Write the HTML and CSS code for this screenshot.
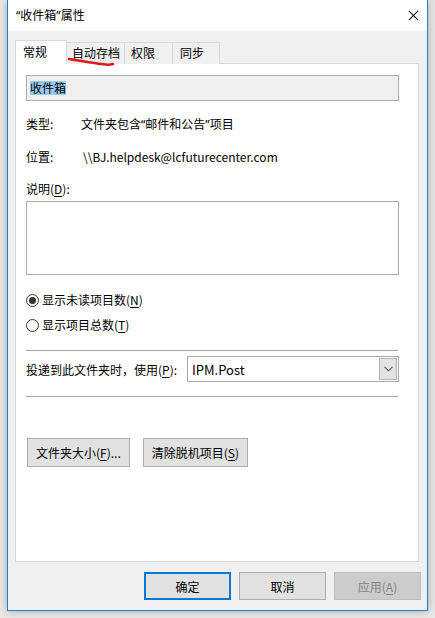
FILE: index.html
```html
<!DOCTYPE html>
<html>
<head>
	<title>“收件箱”属性</title>
	<meta charset="utf-8">
	<link rel="stylesheet" href="styles.css">
</head>
<body>
<div class="window">
	<div class="titlebar">
		<span class="title"><span class="q">“</span>收件箱<span class="q">”</span>属性</span>
		<svg class="close" width="12" height="12" viewBox="0 0 12 12">
			<path d="M1 1 L11 11 M11 1 L1 11" stroke="#000" stroke-width="1.1" fill="none"/>
		</svg>
	</div>

	<div class="tabs">
		<div class="tab active">常规</div>
		<div class="tab t2">自动存档</div>
		<div class="tab t3">权限</div>
		<div class="tab t4">同步</div>
	</div>
	<!-- red pen mark under the second tab -->
	<svg class="mark" width="60" height="14" viewBox="0 0 60 14">
		<path d="M2 3 C 14 5, 26 7, 34 8 S 42 9, 46 8" stroke="#e8141c" stroke-width="2.6" fill="none" stroke-linecap="round"/>
	</svg>

	<div class="panel">
		<div class="namefield"><span class="sel">收件箱</span></div>

		<div class="row r-type"><span class="key">类型:</span><span class="val">文件夹包含<span class="q">“</span>邮件和公告<span class="q">”</span>项目</span></div>
		<div class="row r-loc"><span class="key">位置:</span><span class="val loc">\\BJ.helpdesk@lcfuturecenter.com</span></div>

		<div class="row r-desc">说明(<u>D</u>):</div>
		<div class="textarea"></div>

		<div class="row r-radio1"><span class="radio on"></span>显示未读项目数(<u>N</u>)</div>
		<div class="row r-radio2"><span class="radio"></span>显示项目总数(<u>T</u>)</div>

		<div class="sep s1"></div>
		<div class="combo-row">
			<span class="combo-label">投递到此文件夹时，使用(<u>P</u>):</span>
			<div class="combo">
				<span class="combo-text">IPM.Post</span>
				<span class="combo-btn">
					<svg width="9" height="6" viewBox="0 0 9 6"><path d="M0.5 0.8 L4.5 4.8 L8.5 0.8" stroke="#5a5a5a" stroke-width="1.1" fill="none"/></svg>
				</span>
			</div>
		</div>
		<div class="sep s2"></div>

		<div class="actions">
			<div class="btn">文件夹大小(<u>F</u>)...</div>
			<div class="btn">清除脱机项目(<u>S</u>)</div>
		</div>
	</div>

	<div class="footer">
		<div class="btn wide default">确定</div>
		<div class="btn wide">取消</div>
		<div class="btn wide disabled">应用(<u>A</u>)</div>
	</div>
</div>
</body>
</html>
```

FILE: styles.css
```css
* {
	box-sizing: border-box;
}
html, body {
	margin: 0;
	height: 618px;
	overflow: hidden;
}
body {
	background-color: #e9e9e9;
	font-family: "Noto Sans CJK SC", "Noto Sans", sans-serif;
	font-size: 12px;
	color: #000;
}
u {
	text-decoration-thickness: 1px;
	text-underline-offset: 2px;
}
.q {
	font-family: "Noto Sans", sans-serif;
}

.window {
	position: relative;
	margin-left: 7px;
	width: 421px;
	height: 611px;
	border: 1px solid #1c7fd4;
	border-top: none;
	background-color: #f0f0f0;
	box-shadow: 0 0 9px rgba(0, 0, 0, 0.28);
	display: flex;
	flex-direction: column;
}

.titlebar {
	height: 31px;
	background-color: #fff;
	display: flex;
	align-items: center;
	justify-content: space-between;
	padding: 0 8px 0 8px;
}
.title {
	line-height: 16px;
}
.close {
	width: 11px;
	height: 11px;
}

.tabs {
	display: flex;
	align-items: flex-end;
	height: 24px;
	margin: 9px 0 -1px 7px;
	position: relative;
	z-index: 1;
}
.tab {
	height: 22px;
	line-height: 20px;
	border: 1px solid #d9d9d9;
	border-bottom: none;
	background-color: #f0f0f0;
	margin-left: -1px;
}
.tab.active {
	height: 24px;
	line-height: 22px;
	width: 52px;
	padding-left: 7px;
	background-color: #fff;
	margin-left: 0;
}
.tab.t2 { width: 59px; padding-left: 5px; }
.tab.t3 { width: 49px; padding-left: 6px; }
.tab.t4 { width: 48px; padding-left: 7px; }

.mark {
	position: absolute;
	left: 59px;
	top: 56px;
	z-index: 2;
}

.panel {
	flex: 1;
	margin: 0 8px 0 7px;
	background-color: #fff;
	border: 1px solid #d9d9d9;
	padding: 11px 19px 0 10px;
	display: flex;
	flex-direction: column;
}

.namefield {
	height: 26px;
	border: 1px solid #acacac;
	background-color: #f0f0f0;
	padding-left: 3px;
	line-height: 22px;
	padding-top: 1px;
}
.sel {
	background-color: #99c9ef;
	display: inline-block;
	line-height: 14px;
}

.row {
	height: 20px;
	line-height: 20px;
	display: flex;
	align-items: center;
	white-space: nowrap;
}
.key {
	width: 55px;
}
.val.loc {
	margin-left: 2px;
}
.r-type { margin-top: 13px; }
.r-loc { margin-top: 13px; }
.r-desc { margin-top: 12px; }

.textarea {
	margin-top: 2px;
	height: 74px;
	border: 1px solid #acacac;
	background-color: #fff;
}

.r-radio1 { margin-top: 15px; }
.r-radio2 { margin-top: 5px; }
.radio {
	width: 13px;
	height: 13px;
	border: 1px solid #333;
	border-radius: 50%;
	margin-right: 3px;
	display: flex;
	align-items: center;
	justify-content: center;
	background-color: #fff;
}
.radio.on::after {
	content: "";
	width: 7px;
	height: 7px;
	border-radius: 50%;
	background-color: #333;
}

.sep {
	height: 1px;
	background-color: #a0a0a0;
	margin-right: 1px;
}
.s1 { margin-top: 15px; }
.s2 { margin-top: 14px; }

.combo-row {
	margin-top: 5px;
	display: flex;
	align-items: center;
	justify-content: space-between;
	height: 26px;
}
.combo {
	width: 212px;
	height: 26px;
	border: 1px solid #a9a9a9;
	background-color: #fff;
	display: flex;
	align-items: center;
	justify-content: space-between;
	padding: 0 1px 0 4px;
}
.combo-text {
	font-size: 13px;
}
.combo-btn {
	width: 18px;
	height: 22px;
	background-color: #e3e3e3;
	border: 1px solid #b0b0b0;
	display: flex;
	align-items: center;
	justify-content: center;
}

.actions {
	margin-top: 41px;
	margin-left: 1px;
	display: flex;
	gap: 13px;
}
.btn {
	height: 29px;
	padding: 0 8px;
	border: 1px solid #adadad;
	background-color: #e1e1e1;
	display: flex;
	align-items: center;
	justify-content: center;
	white-space: nowrap;
}

.footer {
	display: flex;
	justify-content: flex-end;
	gap: 8px;
	padding: 10px 6px 10px 0;
}
.btn.wide {
	width: 87px;
	height: 28px;
}
.btn.default {
	border: 2px solid #0078d7;
}
.btn.disabled {
	background-color: #cccccc;
	border-color: #bfbfbf;
	color: #838383;
}
```
